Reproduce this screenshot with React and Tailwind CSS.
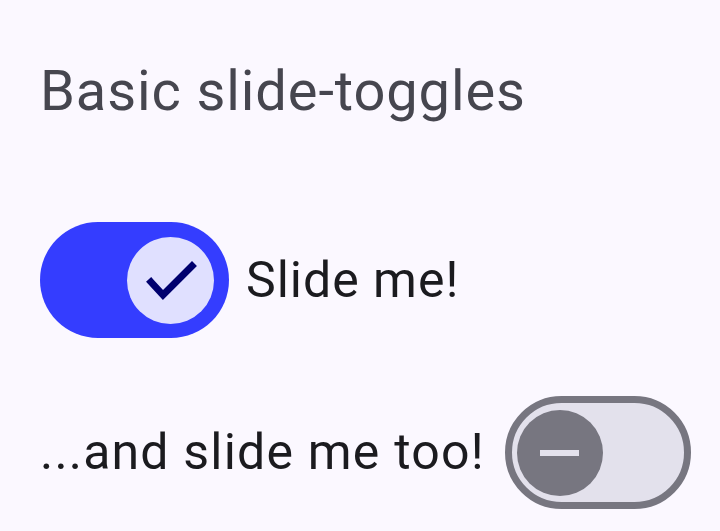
export default function App() {
  return (
    <div className="min-h-[531px] bg-[#fbf8ff] pl-[40px] pt-[59px] font-['Roboto',sans-serif]">
      <h3 className="text-[56px] leading-[64px] font-normal tracking-[0.9px] text-[#46464f]">Basic slide-toggles</h3>

      <div className="mt-[99px] flex items-center gap-[17px]">
        <Toggle checked />
        <span className="text-[50px] tracking-[1px] text-[#1b1b1f]">Slide me!</span>
      </div>

      <div className="mt-[58px] flex items-center gap-[20px]">
        <span className="text-[50px] tracking-[1.2px] text-[#1b1b1f]">...and slide me too!</span>
        <Toggle />
      </div>
    </div>
  )
}

function Toggle({ checked }) {
  if (checked) {
    return (
      <div className="flex h-[116px] w-[189px] items-center justify-end rounded-full bg-[#343dff] pr-[15px]">
        <div className="flex h-[87px] w-[87px] items-center justify-center rounded-full bg-[#e0e0ff]">
          <svg width="87" height="87" viewBox="0 0 87 87" fill="none">
            <polyline points="24,45 36,58 65,29" stroke="#00006e" strokeWidth="7" strokeLinecap="square" />
          </svg>
        </div>
      </div>
    )
  }
  return (
    <div className="flex h-[113px] w-[186px] items-center rounded-full border-[7px] border-[#777680] bg-[#e3e1ec] pl-[5px]">
      <div className="flex h-[86px] w-[86px] items-center justify-center rounded-full bg-[#777680]">
        <div className="h-[6px] w-[39px] bg-[#e3e1ec]" />
      </div>
    </div>
  )
}
